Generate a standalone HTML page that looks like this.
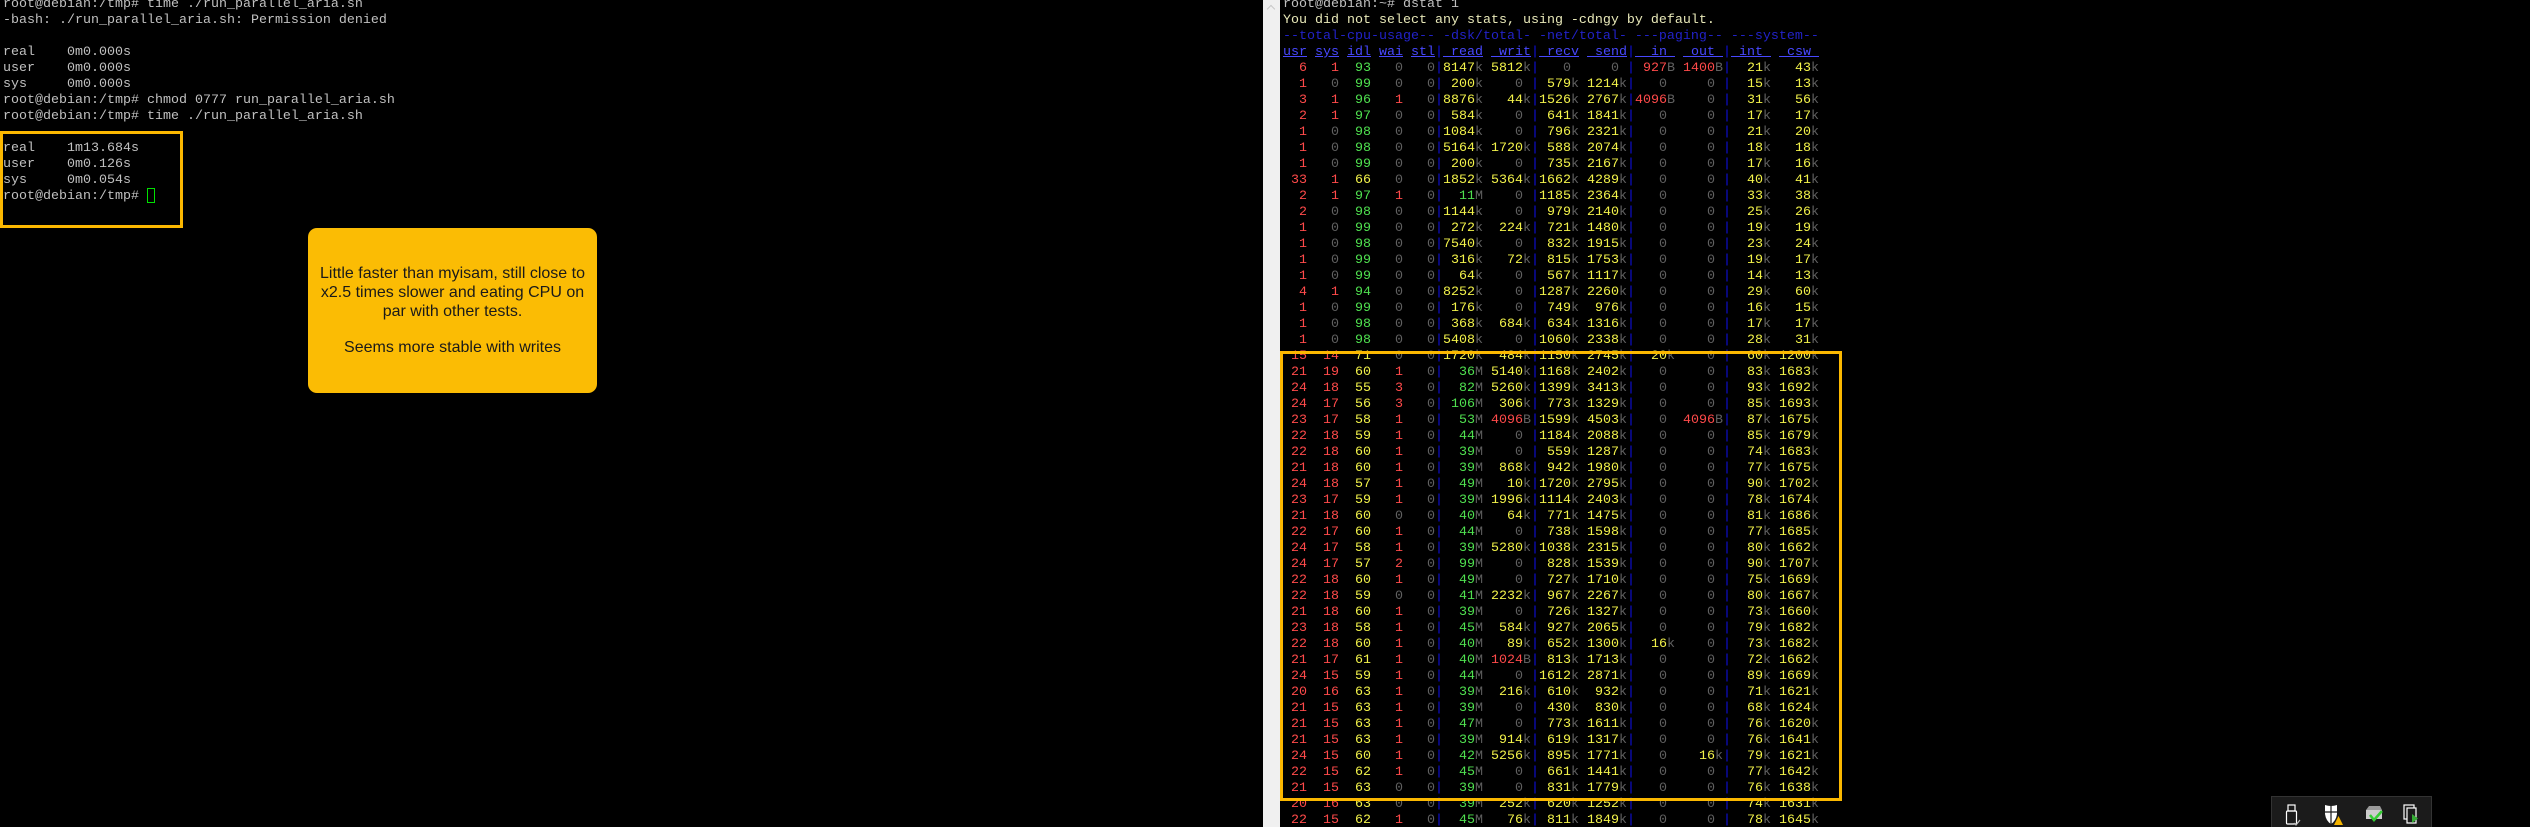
<!DOCTYPE html>
<html><head><meta charset="utf-8">
<style>
html,body{margin:0;padding:0;background:#000;width:2530px;height:827px;overflow:hidden;position:relative}
pre{margin:0;font-family:"Liberation Mono",monospace;font-size:13.33px;line-height:16px;white-space:pre;position:absolute}
#lt{left:3px;top:-3px;color:#c0c0c0}
#rt{left:1283px;top:-3px;color:#c0c0c0}
#sb{position:absolute;left:1263px;top:0;width:17px;height:827px;background:#f0f0f0}
#sb:before{content:"";position:absolute;left:5px;top:6px;width:5px;height:5px;border-left:1.5px solid #c8c8c8;border-top:1.5px solid #c8c8c8;transform:rotate(45deg)}
r{color:#ff4a4a}y{color:#f2f24a}g{color:#4fe04f}d{color:#606060}e{color:#606060}l{color:#1010e0}
.gh{color:#2222c8}.hd{color:#4848ff}.hd u{text-decoration:underline}
.ylw{color:#e8e8b8}
.box{position:absolute;border:3px solid #fbb800;box-sizing:border-box}
#call{position:absolute;left:308px;top:228px;width:289px;height:165px;background:#fbbc04;border-radius:9px;font-family:"Liberation Sans",Arial,sans-serif;font-size:16px;color:#1a1a1a;text-align:center}
#call div{position:absolute;left:0;width:100%;line-height:19px}
#cur{position:absolute;left:147px;top:188px;width:8px;height:15px;border:1.5px solid #00e000;box-sizing:border-box}
#tray{position:absolute;left:2271px;top:796px;width:161px;height:32px;background:#1b1b1b;border:1px solid #333;box-sizing:border-box}
</style></head><body>
<pre id="lt">root@debian:/tmp# time ./run_parallel_aria.sh
-bash: ./run_parallel_aria.sh: Permission denied

real    0m0.000s
user    0m0.000s
sys     0m0.000s
root@debian:/tmp# chmod 0777 run_parallel_aria.sh
root@debian:/tmp# time ./run_parallel_aria.sh

real    1m13.684s
user    0m0.126s
sys     0m0.054s
root@debian:/tmp# </pre>
<div id="cur"></div>
<div class="box" style="left:0;top:131px;width:183px;height:97px"></div>
<div id="call">
<div style="top:36px">Little faster than myisam, still close to</div>
<div style="top:55px">x2.5 times slower and eating CPU on</div>
<div style="top:74px">par with other tests.</div>
<div style="top:110px">Seems more stable with writes</div>
</div>
<div id="sb"></div>
<pre id="rt">root@debian:~# dstat 1
<span class="ylw">You did not select any stats, using -cdngy by default.</span>
<span class="gh">--total-cpu-usage-- -dsk/total- -net/total- ---paging-- ---system--</span>
<span class="hd"><u>usr</u> <u>sys</u> <u>idl</u> <u>wai</u> <u>stl</u><l>|</l><u> read</u> <u> writ</u><l>|</l><u> recv</u> <u> send</u><l>|</l><u>  in </u> <u> out </u><l>|</l><u> int </u> <u> csw </u></span>
<r>  6</r> <r>  1</r> <g> 93</g> <d>  0</d> <d>  0</d><l>|</l><y>8147</y><e>k</e> <y>5812</y><e>k</e><l>|</l><d>   0 </d> <d>   0 </d><l>|</l> <r>927</r><e>B</e> <r>1400</r><e>B</e><l>|</l><y>  21</y><e>k</e> <y>  43</y><e>k</e>
<r>  1</r> <d>  0</d> <g> 99</g> <d>  0</d> <d>  0</d><l>|</l><y> 200</y><e>k</e> <d>   0 </d><l>|</l><y> 579</y><e>k</e> <y>1214</y><e>k</e><l>|</l><d>   0 </d> <d>   0 </d><l>|</l><y>  15</y><e>k</e> <y>  13</y><e>k</e>
<r>  3</r> <r>  1</r> <g> 96</g> <r>  1</r> <d>  0</d><l>|</l><y>8876</y><e>k</e> <y>  44</y><e>k</e><l>|</l><y>1526</y><e>k</e> <y>2767</y><e>k</e><l>|</l><r>4096</r><e>B</e> <d>   0 </d><l>|</l><y>  31</y><e>k</e> <y>  56</y><e>k</e>
<r>  2</r> <r>  1</r> <g> 97</g> <d>  0</d> <d>  0</d><l>|</l><y> 584</y><e>k</e> <d>   0 </d><l>|</l><y> 641</y><e>k</e> <y>1841</y><e>k</e><l>|</l><d>   0 </d> <d>   0 </d><l>|</l><y>  17</y><e>k</e> <y>  17</y><e>k</e>
<r>  1</r> <d>  0</d> <g> 98</g> <d>  0</d> <d>  0</d><l>|</l><y>1084</y><e>k</e> <d>   0 </d><l>|</l><y> 796</y><e>k</e> <y>2321</y><e>k</e><l>|</l><d>   0 </d> <d>   0 </d><l>|</l><y>  21</y><e>k</e> <y>  20</y><e>k</e>
<r>  1</r> <d>  0</d> <g> 98</g> <d>  0</d> <d>  0</d><l>|</l><y>5164</y><e>k</e> <y>1720</y><e>k</e><l>|</l><y> 588</y><e>k</e> <y>2074</y><e>k</e><l>|</l><d>   0 </d> <d>   0 </d><l>|</l><y>  18</y><e>k</e> <y>  18</y><e>k</e>
<r>  1</r> <d>  0</d> <g> 99</g> <d>  0</d> <d>  0</d><l>|</l><y> 200</y><e>k</e> <d>   0 </d><l>|</l><y> 735</y><e>k</e> <y>2167</y><e>k</e><l>|</l><d>   0 </d> <d>   0 </d><l>|</l><y>  17</y><e>k</e> <y>  16</y><e>k</e>
<r> 33</r> <r>  1</r> <y> 66</y> <d>  0</d> <d>  0</d><l>|</l><y>1852</y><e>k</e> <y>5364</y><e>k</e><l>|</l><y>1662</y><e>k</e> <y>4289</y><e>k</e><l>|</l><d>   0 </d> <d>   0 </d><l>|</l><y>  40</y><e>k</e> <y>  41</y><e>k</e>
<r>  2</r> <r>  1</r> <g> 97</g> <r>  1</r> <d>  0</d><l>|</l><g>  11</g><e>M</e> <d>   0 </d><l>|</l><y>1185</y><e>k</e> <y>2364</y><e>k</e><l>|</l><d>   0 </d> <d>   0 </d><l>|</l><y>  33</y><e>k</e> <y>  38</y><e>k</e>
<r>  2</r> <d>  0</d> <g> 98</g> <d>  0</d> <d>  0</d><l>|</l><y>1144</y><e>k</e> <d>   0 </d><l>|</l><y> 979</y><e>k</e> <y>2140</y><e>k</e><l>|</l><d>   0 </d> <d>   0 </d><l>|</l><y>  25</y><e>k</e> <y>  26</y><e>k</e>
<r>  1</r> <d>  0</d> <g> 99</g> <d>  0</d> <d>  0</d><l>|</l><y> 272</y><e>k</e> <y> 224</y><e>k</e><l>|</l><y> 721</y><e>k</e> <y>1480</y><e>k</e><l>|</l><d>   0 </d> <d>   0 </d><l>|</l><y>  19</y><e>k</e> <y>  19</y><e>k</e>
<r>  1</r> <d>  0</d> <g> 98</g> <d>  0</d> <d>  0</d><l>|</l><y>7540</y><e>k</e> <d>   0 </d><l>|</l><y> 832</y><e>k</e> <y>1915</y><e>k</e><l>|</l><d>   0 </d> <d>   0 </d><l>|</l><y>  23</y><e>k</e> <y>  24</y><e>k</e>
<r>  1</r> <d>  0</d> <g> 99</g> <d>  0</d> <d>  0</d><l>|</l><y> 316</y><e>k</e> <y>  72</y><e>k</e><l>|</l><y> 815</y><e>k</e> <y>1753</y><e>k</e><l>|</l><d>   0 </d> <d>   0 </d><l>|</l><y>  19</y><e>k</e> <y>  17</y><e>k</e>
<r>  1</r> <d>  0</d> <g> 99</g> <d>  0</d> <d>  0</d><l>|</l><y>  64</y><e>k</e> <d>   0 </d><l>|</l><y> 567</y><e>k</e> <y>1117</y><e>k</e><l>|</l><d>   0 </d> <d>   0 </d><l>|</l><y>  14</y><e>k</e> <y>  13</y><e>k</e>
<r>  4</r> <r>  1</r> <g> 94</g> <d>  0</d> <d>  0</d><l>|</l><y>8252</y><e>k</e> <d>   0 </d><l>|</l><y>1287</y><e>k</e> <y>2260</y><e>k</e><l>|</l><d>   0 </d> <d>   0 </d><l>|</l><y>  29</y><e>k</e> <y>  60</y><e>k</e>
<r>  1</r> <d>  0</d> <g> 99</g> <d>  0</d> <d>  0</d><l>|</l><y> 176</y><e>k</e> <d>   0 </d><l>|</l><y> 749</y><e>k</e> <y> 976</y><e>k</e><l>|</l><d>   0 </d> <d>   0 </d><l>|</l><y>  16</y><e>k</e> <y>  15</y><e>k</e>
<r>  1</r> <d>  0</d> <g> 98</g> <d>  0</d> <d>  0</d><l>|</l><y> 368</y><e>k</e> <y> 684</y><e>k</e><l>|</l><y> 634</y><e>k</e> <y>1316</y><e>k</e><l>|</l><d>   0 </d> <d>   0 </d><l>|</l><y>  17</y><e>k</e> <y>  17</y><e>k</e>
<r>  1</r> <d>  0</d> <g> 98</g> <d>  0</d> <d>  0</d><l>|</l><y>5408</y><e>k</e> <d>   0 </d><l>|</l><y>1060</y><e>k</e> <y>2338</y><e>k</e><l>|</l><d>   0 </d> <d>   0 </d><l>|</l><y>  28</y><e>k</e> <y>  31</y><e>k</e>
<r> 15</r> <r> 14</r> <y> 71</y> <d>  0</d> <d>  0</d><l>|</l><y>1720</y><e>k</e> <y> 484</y><e>k</e><l>|</l><y>1150</y><e>k</e> <y>2745</y><e>k</e><l>|</l><y>  20</y><e>k</e> <d>   0 </d><l>|</l><y>  60</y><e>k</e> <y>1200</y><e>k</e>
<r> 21</r> <r> 19</r> <y> 60</y> <r>  1</r> <d>  0</d><l>|</l><g>  36</g><e>M</e> <y>5140</y><e>k</e><l>|</l><y>1168</y><e>k</e> <y>2402</y><e>k</e><l>|</l><d>   0 </d> <d>   0 </d><l>|</l><y>  83</y><e>k</e> <y>1683</y><e>k</e>
<r> 24</r> <r> 18</r> <y> 55</y> <r>  3</r> <d>  0</d><l>|</l><g>  82</g><e>M</e> <y>5260</y><e>k</e><l>|</l><y>1399</y><e>k</e> <y>3413</y><e>k</e><l>|</l><d>   0 </d> <d>   0 </d><l>|</l><y>  93</y><e>k</e> <y>1692</y><e>k</e>
<r> 24</r> <r> 17</r> <y> 56</y> <r>  3</r> <d>  0</d><l>|</l><g> 106</g><e>M</e> <y> 306</y><e>k</e><l>|</l><y> 773</y><e>k</e> <y>1329</y><e>k</e><l>|</l><d>   0 </d> <d>   0 </d><l>|</l><y>  85</y><e>k</e> <y>1693</y><e>k</e>
<r> 23</r> <r> 17</r> <y> 58</y> <r>  1</r> <d>  0</d><l>|</l><g>  53</g><e>M</e> <r>4096</r><e>B</e><l>|</l><y>1599</y><e>k</e> <y>4503</y><e>k</e><l>|</l><d>   0 </d> <r>4096</r><e>B</e><l>|</l><y>  87</y><e>k</e> <y>1675</y><e>k</e>
<r> 22</r> <r> 18</r> <y> 59</y> <r>  1</r> <d>  0</d><l>|</l><g>  44</g><e>M</e> <d>   0 </d><l>|</l><y>1184</y><e>k</e> <y>2088</y><e>k</e><l>|</l><d>   0 </d> <d>   0 </d><l>|</l><y>  85</y><e>k</e> <y>1679</y><e>k</e>
<r> 22</r> <r> 18</r> <y> 60</y> <r>  1</r> <d>  0</d><l>|</l><g>  39</g><e>M</e> <d>   0 </d><l>|</l><y> 559</y><e>k</e> <y>1287</y><e>k</e><l>|</l><d>   0 </d> <d>   0 </d><l>|</l><y>  74</y><e>k</e> <y>1683</y><e>k</e>
<r> 21</r> <r> 18</r> <y> 60</y> <r>  1</r> <d>  0</d><l>|</l><g>  39</g><e>M</e> <y> 868</y><e>k</e><l>|</l><y> 942</y><e>k</e> <y>1980</y><e>k</e><l>|</l><d>   0 </d> <d>   0 </d><l>|</l><y>  77</y><e>k</e> <y>1675</y><e>k</e>
<r> 24</r> <r> 18</r> <y> 57</y> <r>  1</r> <d>  0</d><l>|</l><g>  49</g><e>M</e> <y>  10</y><e>k</e><l>|</l><y>1720</y><e>k</e> <y>2795</y><e>k</e><l>|</l><d>   0 </d> <d>   0 </d><l>|</l><y>  90</y><e>k</e> <y>1702</y><e>k</e>
<r> 23</r> <r> 17</r> <y> 59</y> <r>  1</r> <d>  0</d><l>|</l><g>  39</g><e>M</e> <y>1996</y><e>k</e><l>|</l><y>1114</y><e>k</e> <y>2403</y><e>k</e><l>|</l><d>   0 </d> <d>   0 </d><l>|</l><y>  78</y><e>k</e> <y>1674</y><e>k</e>
<r> 21</r> <r> 18</r> <y> 60</y> <d>  0</d> <d>  0</d><l>|</l><g>  40</g><e>M</e> <y>  64</y><e>k</e><l>|</l><y> 771</y><e>k</e> <y>1475</y><e>k</e><l>|</l><d>   0 </d> <d>   0 </d><l>|</l><y>  81</y><e>k</e> <y>1686</y><e>k</e>
<r> 22</r> <r> 17</r> <y> 60</y> <r>  1</r> <d>  0</d><l>|</l><g>  44</g><e>M</e> <d>   0 </d><l>|</l><y> 738</y><e>k</e> <y>1598</y><e>k</e><l>|</l><d>   0 </d> <d>   0 </d><l>|</l><y>  77</y><e>k</e> <y>1685</y><e>k</e>
<r> 24</r> <r> 17</r> <y> 58</y> <r>  1</r> <d>  0</d><l>|</l><g>  39</g><e>M</e> <y>5280</y><e>k</e><l>|</l><y>1038</y><e>k</e> <y>2315</y><e>k</e><l>|</l><d>   0 </d> <d>   0 </d><l>|</l><y>  80</y><e>k</e> <y>1662</y><e>k</e>
<r> 24</r> <r> 17</r> <y> 57</y> <r>  2</r> <d>  0</d><l>|</l><g>  99</g><e>M</e> <d>   0 </d><l>|</l><y> 828</y><e>k</e> <y>1539</y><e>k</e><l>|</l><d>   0 </d> <d>   0 </d><l>|</l><y>  90</y><e>k</e> <y>1707</y><e>k</e>
<r> 22</r> <r> 18</r> <y> 60</y> <r>  1</r> <d>  0</d><l>|</l><g>  49</g><e>M</e> <d>   0 </d><l>|</l><y> 727</y><e>k</e> <y>1710</y><e>k</e><l>|</l><d>   0 </d> <d>   0 </d><l>|</l><y>  75</y><e>k</e> <y>1669</y><e>k</e>
<r> 22</r> <r> 18</r> <y> 59</y> <d>  0</d> <d>  0</d><l>|</l><g>  41</g><e>M</e> <y>2232</y><e>k</e><l>|</l><y> 967</y><e>k</e> <y>2267</y><e>k</e><l>|</l><d>   0 </d> <d>   0 </d><l>|</l><y>  80</y><e>k</e> <y>1667</y><e>k</e>
<r> 21</r> <r> 18</r> <y> 60</y> <r>  1</r> <d>  0</d><l>|</l><g>  39</g><e>M</e> <d>   0 </d><l>|</l><y> 726</y><e>k</e> <y>1327</y><e>k</e><l>|</l><d>   0 </d> <d>   0 </d><l>|</l><y>  73</y><e>k</e> <y>1660</y><e>k</e>
<r> 23</r> <r> 18</r> <y> 58</y> <r>  1</r> <d>  0</d><l>|</l><g>  45</g><e>M</e> <y> 584</y><e>k</e><l>|</l><y> 927</y><e>k</e> <y>2065</y><e>k</e><l>|</l><d>   0 </d> <d>   0 </d><l>|</l><y>  79</y><e>k</e> <y>1682</y><e>k</e>
<r> 22</r> <r> 18</r> <y> 60</y> <r>  1</r> <d>  0</d><l>|</l><g>  40</g><e>M</e> <y>  89</y><e>k</e><l>|</l><y> 652</y><e>k</e> <y>1300</y><e>k</e><l>|</l><y>  16</y><e>k</e> <d>   0 </d><l>|</l><y>  73</y><e>k</e> <y>1682</y><e>k</e>
<r> 21</r> <r> 17</r> <y> 61</y> <r>  1</r> <d>  0</d><l>|</l><g>  40</g><e>M</e> <r>1024</r><e>B</e><l>|</l><y> 813</y><e>k</e> <y>1713</y><e>k</e><l>|</l><d>   0 </d> <d>   0 </d><l>|</l><y>  72</y><e>k</e> <y>1662</y><e>k</e>
<r> 24</r> <r> 15</r> <y> 59</y> <r>  1</r> <d>  0</d><l>|</l><g>  44</g><e>M</e> <d>   0 </d><l>|</l><y>1612</y><e>k</e> <y>2871</y><e>k</e><l>|</l><d>   0 </d> <d>   0 </d><l>|</l><y>  89</y><e>k</e> <y>1669</y><e>k</e>
<r> 20</r> <r> 16</r> <y> 63</y> <r>  1</r> <d>  0</d><l>|</l><g>  39</g><e>M</e> <y> 216</y><e>k</e><l>|</l><y> 610</y><e>k</e> <y> 932</y><e>k</e><l>|</l><d>   0 </d> <d>   0 </d><l>|</l><y>  71</y><e>k</e> <y>1621</y><e>k</e>
<r> 21</r> <r> 15</r> <y> 63</y> <r>  1</r> <d>  0</d><l>|</l><g>  39</g><e>M</e> <d>   0 </d><l>|</l><y> 430</y><e>k</e> <y> 830</y><e>k</e><l>|</l><d>   0 </d> <d>   0 </d><l>|</l><y>  68</y><e>k</e> <y>1624</y><e>k</e>
<r> 21</r> <r> 15</r> <y> 63</y> <r>  1</r> <d>  0</d><l>|</l><g>  47</g><e>M</e> <d>   0 </d><l>|</l><y> 773</y><e>k</e> <y>1611</y><e>k</e><l>|</l><d>   0 </d> <d>   0 </d><l>|</l><y>  76</y><e>k</e> <y>1620</y><e>k</e>
<r> 21</r> <r> 15</r> <y> 63</y> <r>  1</r> <d>  0</d><l>|</l><g>  39</g><e>M</e> <y> 914</y><e>k</e><l>|</l><y> 619</y><e>k</e> <y>1317</y><e>k</e><l>|</l><d>   0 </d> <d>   0 </d><l>|</l><y>  76</y><e>k</e> <y>1641</y><e>k</e>
<r> 24</r> <r> 15</r> <y> 60</y> <r>  1</r> <d>  0</d><l>|</l><g>  42</g><e>M</e> <y>5256</y><e>k</e><l>|</l><y> 895</y><e>k</e> <y>1771</y><e>k</e><l>|</l><d>   0 </d> <y>  16</y><e>k</e><l>|</l><y>  79</y><e>k</e> <y>1621</y><e>k</e>
<r> 22</r> <r> 15</r> <y> 62</y> <r>  1</r> <d>  0</d><l>|</l><g>  45</g><e>M</e> <d>   0 </d><l>|</l><y> 661</y><e>k</e> <y>1441</y><e>k</e><l>|</l><d>   0 </d> <d>   0 </d><l>|</l><y>  77</y><e>k</e> <y>1642</y><e>k</e>
<r> 21</r> <r> 15</r> <y> 63</y> <d>  0</d> <d>  0</d><l>|</l><g>  39</g><e>M</e> <d>   0 </d><l>|</l><y> 831</y><e>k</e> <y>1779</y><e>k</e><l>|</l><d>   0 </d> <d>   0 </d><l>|</l><y>  76</y><e>k</e> <y>1638</y><e>k</e>
<r> 20</r> <r> 16</r> <y> 63</y> <d>  0</d> <d>  0</d><l>|</l><g>  39</g><e>M</e> <y> 252</y><e>k</e><l>|</l><y> 620</y><e>k</e> <y>1252</y><e>k</e><l>|</l><d>   0 </d> <d>   0 </d><l>|</l><y>  74</y><e>k</e> <y>1631</y><e>k</e>
<r> 22</r> <r> 15</r> <y> 62</y> <r>  1</r> <d>  0</d><l>|</l><g>  45</g><e>M</e> <y>  76</y><e>k</e><l>|</l><y> 811</y><e>k</e> <y>1849</y><e>k</e><l>|</l><d>   0 </d> <d>   0 </d><l>|</l><y>  78</y><e>k</e> <y>1645</y><e>k</e></pre>
<div class="box" style="left:1280px;top:351px;width:562px;height:450px"></div>
<div id="tray">
<svg width="161" height="31" viewBox="0 0 161 31" style="position:absolute;left:0;top:0">
<g fill="none" stroke="#fff" stroke-width="1.2">
<rect x="16" y="8" width="7" height="6"/><rect x="14.5" y="14" width="10" height="13" rx="1"/>
<path d="M22 26 L24 28 L28 23" stroke="#bbb"/>
</g>
<path d="M53 8 Q59 10 65 8 L65 17 Q64 24 59 27 Q54 24 53 17 Z" fill="#fff"/>
<path d="M59 8 V27 M53 15 H65" stroke="#1b1b1b" stroke-width="1.2"/>
<path d="M62 28 L66.5 19 L71 28 Z" fill="#f5b400"/>
<rect x="94" y="13" width="16" height="9" fill="#ccc"/><path d="M94 13 L97 9 H108 L110 13" fill="#999"/>
<path d="M98 18 L102 23 L110 14" stroke="#3c3" stroke-width="2.5" fill="none"/>
<rect x="132" y="8" width="10" height="14" fill="none" stroke="#fff" stroke-width="1.2"/>
<rect x="135" y="11" width="9" height="15" fill="#1b1b1b" stroke="#fff" stroke-width="1.2"/>
<path d="M140 17 L146 21.5 L140 26 Z" fill="#3a3"/>
</svg>
</div>
</body></html>
